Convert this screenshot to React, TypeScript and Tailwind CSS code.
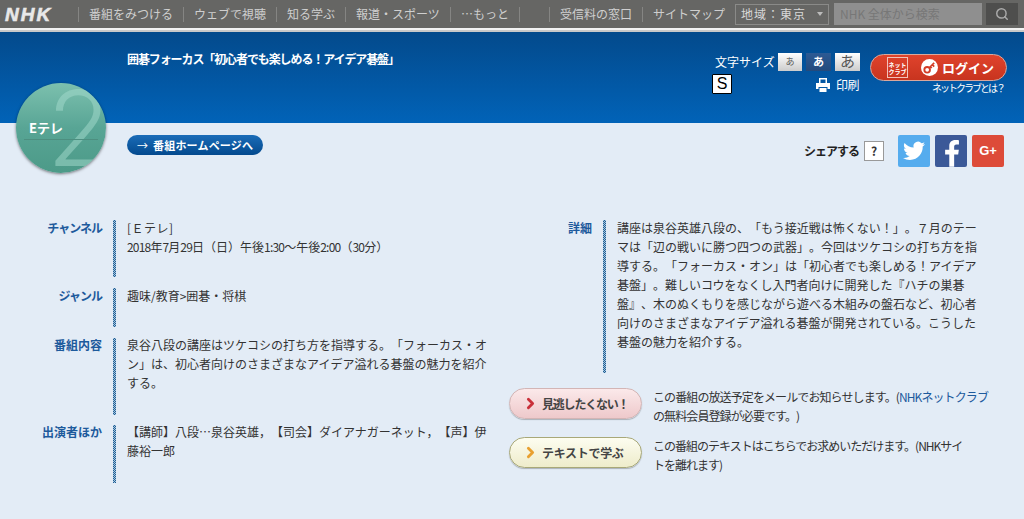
import { Search, ChevronRight } from "lucide-react";

const font = "font-['Noto_Sans_CJK_JP','Noto_Sans_CJK_SC',sans-serif] [text-spacing-trim:space-all]";

const navItems = [
  { t: "番組をみつける", w: "w-[105px]" },
  { t: "ウェブで視聴", w: "w-[93px]" },
  { t: "知る学ぶ", w: "w-[69px]" },
  { t: "報道・スポーツ", w: "w-[105px]" },
  { t: "…もっと", w: "w-[69px]" },
  { t: "", w: "w-[30px]" },
  { t: "受信料の窓口", w: "w-[93px]" },
  { t: "サイトマップ", w: "w-[93px]" },
];

function Bar({ className }: { className: string }) {
  return (
    <div className={`w-[3px] shrink-0 bg-[repeating-conic-gradient(#1d5f96_0_25%,#a9c4dc_0_50%)] bg-[length:2px_2px] ${className}`} />
  );
}

function D({ children }: { children: React.ReactNode }) {
  return <span className="tracking-[-0.8px]">{children}</span>;
}

function Row({ label, track, h, mb, shift, children }: { label: string; track: string; h: string; mb: string; shift: string; children: React.ReactNode }) {
  return (
    <div className={`flex ${h} ${mb}`}>
      <div className={`w-[72px] shrink-0 ${shift} text-right text-[12px] leading-[19px] font-bold whitespace-nowrap text-[#1d5a9c] ${track}`}>{label}</div>
      <Bar className="ml-[11px]" />
      <div className={`ml-[11px] ${shift} w-[362px] text-[12px] leading-[19px] text-[#333]`}>{children}</div>
    </div>
  );
}

function Pill({ label, track, border, from, to, arrow }: { label: string; track: string; border: string; from: string; to: string; arrow: string }) {
  return (
    <div className={`flex h-[31px] w-[133px] shrink-0 items-center rounded-full border ${border} bg-gradient-to-b ${from} ${to} pl-[12px] shadow-[0_1px_1px_rgba(0,0,0,0.25)]`}>
      <ChevronRight size={17} strokeWidth={4} className={arrow} />
      <span className={`ml-[3px] text-[12px] font-bold whitespace-nowrap text-[#444] ${track}`}>{label}</span>
    </div>
  );
}

export default function App() {
  return (
    <div className={`relative h-[519px] w-[1024px] overflow-hidden bg-[#e3ecf6] ${font}`}>
      {/* top nav */}
      <div className="flex h-[28px] items-center bg-[#666664] pl-[5px]">
        <div className="w-[73px] shrink-0 font-['Liberation_Sans',sans-serif] text-[19px] leading-none font-black tracking-[2px] text-[#e8e8e8] italic [-webkit-text-stroke:0.6px_#e8e8e8]">NHK</div>
        <div className="flex h-[15px] shrink-0 items-center">
          {navItems.map((n, i) => (
            <div key={i} className={`${n.w} flex h-full shrink-0 items-center border-l border-[#858583] pl-[10px] text-[12px] whitespace-nowrap text-[#cfcfcf]`}>
              {n.t}
            </div>
          ))}
        </div>
        <div className="flex h-[21px] w-[94px] shrink-0 items-center justify-between border border-[#8a8a88] pr-[3px] pl-[5px] text-[12px] tracking-[1px] whitespace-nowrap text-[#d8d8d8]">
          <span>地域：東京</span>
          <span className="mr-[2px] h-0 w-0 border-x-[3px] border-t-[4px] border-x-transparent border-t-[#bbb]" />
        </div>
        <div className="ml-[5px] flex h-[22px] w-[148px] shrink-0 items-center bg-[#8f8f8f] pl-[6px] text-[12px] whitespace-nowrap text-[#777]">NHK 全体から検索</div>
        <div className="ml-[4px] flex h-[22px] w-[32px] shrink-0 items-center justify-center bg-[#4e4e4d]">
          <Search size={14} strokeWidth={2.5} className="text-[#aaa]" />
        </div>
      </div>
      <div className="h-[2px] bg-[#f2f2f2]" />
      <div className="h-[2px] bg-[#c9c9c9]" />

      {/* blue header */}
      <div className="flex h-[91px] bg-gradient-to-b from-[#034a8c] to-[#0163b8] pt-[20px]">
        <div className="ml-[127px] -mt-px w-[430px] text-[12px] leading-[16px] font-bold tracking-[-1.1px] text-white">
          囲碁フォーカス「初心者でも楽しめる！アイデア碁盤」
        </div>
        <div className="ml-[158px] w-[147px]">
          <div className="flex h-[19px] items-center">
            <span className="w-[63px] text-[12px] whitespace-nowrap text-white">文字サイズ</span>
            <span className="flex h-[18px] w-[24px] items-center justify-center bg-gradient-to-b from-white to-[#ccc] text-[9px] text-[#555]">あ</span>
            <span className="ml-[4px] flex h-[18px] w-[25px] items-center justify-center bg-gradient-to-b from-[#2c5a94] to-[#234a7c] text-[11px] font-bold text-white">あ</span>
            <span className="ml-[4px] flex h-[18px] w-[25px] items-center justify-center bg-gradient-to-b from-white to-[#ccc] text-[15px] text-[#555]">あ</span>
          </div>
          <div className="mt-[3px] flex items-start">
            <span className="-ml-[3px] flex h-[20px] w-[20px] items-center justify-center rounded-[1px] border border-black bg-white font-['Liberation_Sans',sans-serif] text-[16px] leading-none text-black">S</span>
            <svg viewBox="0 0 14 14" className="mt-[4px] ml-[84px] h-[14px] w-[14px]" fill="#fff">
              <path d="M3 0h8v5h3v6h-2.500V9h-9v2H0V5h3zM4.500 1.500V5h5V1.500zM3.500 10h7v4h-7z" />
            </svg>
            <span className="mt-[1px] ml-[6px] text-[12px] leading-[20px] tracking-[-0.5px] text-white">印刷</span>
          </div>
        </div>
        <div className="ml-[8px] w-[137px]">
          <div className="mt-[2px] flex h-[27px] items-center rounded-full border border-[#d9a79c] bg-gradient-to-b from-[#e0432c] to-[#c8341f] pl-[16px] text-white">
            <span className="flex h-[21px] w-[21px] items-center justify-center border border-[#f3c2b8] text-center text-[6px] leading-[7px] font-bold whitespace-nowrap">ネット<br />クラブ</span>
            <span className="ml-[13px] flex h-[17px] w-[17px] items-center justify-center rounded-full bg-white">
              <svg viewBox="0 0 16 16" className="h-[15px] w-[15px]"><circle cx="5.500" cy="10.500" r="3" fill="none" stroke="#d33c26" strokeWidth="2" /><path d="M8 8l5-5M11 5l2 2M9 7l1.500 1.500" stroke="#d33c26" strokeWidth="1.800" fill="none" /></svg>
            </span>
            <span className="ml-[4px] text-[13px] font-bold whitespace-nowrap">ログイン</span>
          </div>
          <div className="-mt-[1px] pr-[3px] text-right text-[10px] tracking-[-2px] whitespace-nowrap text-white">ネットクラブとは？</div>
        </div>
      </div>

      {/* E-tele logo */}
      <div className="absolute top-[83px] left-[16px] h-[90px] w-[90px] overflow-hidden rounded-full bg-gradient-to-b from-[#7cc0ae] via-[#58a595] to-[#4c9a88] shadow-[0_1px_3px_rgba(0,0,0,0.5)]">
        <span className="absolute top-[-15px] left-[31px] font-['Inter',sans-serif] text-[104px] leading-[120px] font-light text-[#a5dccd]/50">2</span>
        <span className="absolute top-[35px] left-[13px] text-[13px] leading-[20px] font-bold whitespace-nowrap text-white">Eテレ</span>
        <div className="absolute top-[56px] left-[8px] h-px w-[74px] bg-[#4d8f80]" />
      </div>

      {/* sub row */}
      <div className="flex h-[97px] items-start pt-[12px]">
        <div className="ml-[127px] flex h-[20px] w-[136px] shrink-0 items-center rounded-full bg-gradient-to-b from-[#1a6cb8] to-[#044a8e] pl-[10px] text-[11px] font-bold whitespace-nowrap text-white">
          <span className="font-normal">→</span>
          <span className="ml-[5px] tracking-[0.2px]">番組ホームページへ</span>
        </div>
        <div className="ml-[541px] flex items-center">
          <span className="w-[55px] text-[12px] leading-[28px] font-bold tracking-[-1px] whitespace-nowrap text-[#222]">シェアする</span>
          <span className="ml-[5px] flex h-[20px] w-[20px] items-center justify-center border border-[#999] bg-white text-[12px] font-bold text-[#333]">?</span>
          <span className="ml-[14px] flex h-[32px] w-[32px] items-center justify-center rounded-[2px] bg-[#55acee]">
            <svg viewBox="0 0 24 24" className="h-[24px] w-[24px]" fill="#fff"><path d="M23 5c-.8.4-1.700.6-2.600.7.900-.6 1.700-1.400 2-2.500-.9.500-1.900.9-2.900 1.100A4.500 4.500 0 0 0 11.700 8.500C8 8.300 4.700 6.600 2.500 3.900c-1.200 2.100-.6 4.700 1.400 6-.7 0-1.400-.2-2-.6 0 2.200 1.500 4.100 3.600 4.600-.7.200-1.400.2-2 .1.600 1.800 2.300 3.100 4.200 3.100A9.200 9.200 0 0 1 1 19c2 1.300 4.400 2 6.900 2 8.400 0 13.100-7.100 12.800-13.400.9-.6 1.700-1.500 2.300-2.600z" /></svg>
          </span>
          <span className="ml-[5px] flex h-[32px] w-[32px] items-end justify-center overflow-hidden rounded-[2px] bg-[#3b5998]">
            <svg viewBox="0 0 16 26" className="h-[28px] w-[17px]" fill="#fff"><path d="M10.500 26V14.500h3.800l.6-4.500h-4.400V7.200c0-1.300.4-2.200 2.200-2.200H15V1C14.600 1 13.200.8 11.600.8 8.200.8 5.900 2.900 5.900 6.700V10H2v4.500h3.900V26z" /></svg>
          </span>
          <span className="ml-[5px] flex h-[32px] w-[32px] items-center justify-center rounded-[2px] bg-[#dd4b39] font-['Liberation_Sans',sans-serif] text-[13px] font-bold text-white">G+</span>
        </div>
      </div>

      {/* main columns */}
      <div className="flex pl-[30px]">
        <div className="w-[479px]">
          <Row label="チャンネル" track="tracking-[-1px]" h="h-[57px]" mb="mb-[11px]" shift="-mt-[2px]">
            <div className="tracking-[0.5px]">[Ｅテレ]</div>
            <div className="whitespace-nowrap"><D>2018</D>年<D>7</D>月<D>29</D>日（日）午後<D>1:30</D>～午後<D>2:00</D>（<D>30</D>分）</div>
          </Row>
          <Row label="ジャンル" track="tracking-[-1px]" h="h-[39px]" mb="mb-[11px]" shift="-mt-[2px]">
            趣味/教育&gt;囲碁・将棋
          </Row>
          <Row label="番組内容" track="" h="h-[77px]" mb="mb-[10px]" shift="-mt-[3px]">
            泉谷八段の講座はツケコシの打ち方を指導する。「フォーカス・オン」は、初心者向けのさまざまなアイデア溢れる碁盤の魅力を紹介する。
          </Row>
          <Row label="出演者ほか" track="" h="h-[58px]" mb="mb-0" shift="-mt-[3px]">
            【講師】八段…泉谷英雄，【司会】ダイアナガーネット，【声】伊藤裕一郎
          </Row>
        </div>
        <div className="w-[490px]">
          <div className="flex h-[168px]">
            <div className="-mt-[2px] w-[83px] text-right text-[12px] leading-[19px] font-bold text-[#1d5a9c]">詳細</div>
            <Bar className="ml-[11px] h-[153px]" />
            <div className="-mt-[2px] ml-[11px] w-[362px] text-[12px] leading-[19px] text-[#333]">
              講座は泉谷英雄八段の、「もう接近戦は怖くない！」。７月のテーマは「辺の戦いに勝つ四つの武器」。今回はツケコシの打ち方を指導する。「フォーカス・オン」は「初心者でも楽しめる！アイデア碁盤」。難しいコウをなくし入門者向けに開発した『ハチの巣碁盤』、木のぬくもりを感じながら遊べる木組みの盤石など、初心者向けのさまざまなアイデア溢れる碁盤が開発されている。こうした碁盤の魅力を紹介する。
            </div>
          </div>
          <div className="flex">
            <Pill label="見逃したくない！" track="tracking-[-1.2px]" border="border-[#d3b5b5]" from="from-[#fbe9ea]" to="to-[#eec9cb]" arrow="text-[#c9303a]" />
            <div className="ml-[11px] -mt-px text-[12px] leading-[19px] tracking-[-0.9px] whitespace-nowrap text-[#333]">
              この番組の放送予定をメールでお知らせします。(<span className="text-[#1d5a9c]">NHKネットクラブ</span><br />の無料会員登録が必要です。)
            </div>
          </div>
          <div className="mt-[12px] flex">
            <Pill label="テキストで学ぶ" track="tracking-[-0.3px]" border="border-[#a8a878]" from="from-[#fdfdf0]" to="to-[#eeeccb]" arrow="text-[#e8a030]" />
            <div className="ml-[11px] -mt-[1px] text-[12px] leading-[19px] tracking-[-1px] whitespace-nowrap text-[#333]">
              この番組のテキストはこちらでお求めいただけます。(NHKサイ<br />トを離れます)
            </div>
          </div>
        </div>
      </div>
    </div>
  );
}
